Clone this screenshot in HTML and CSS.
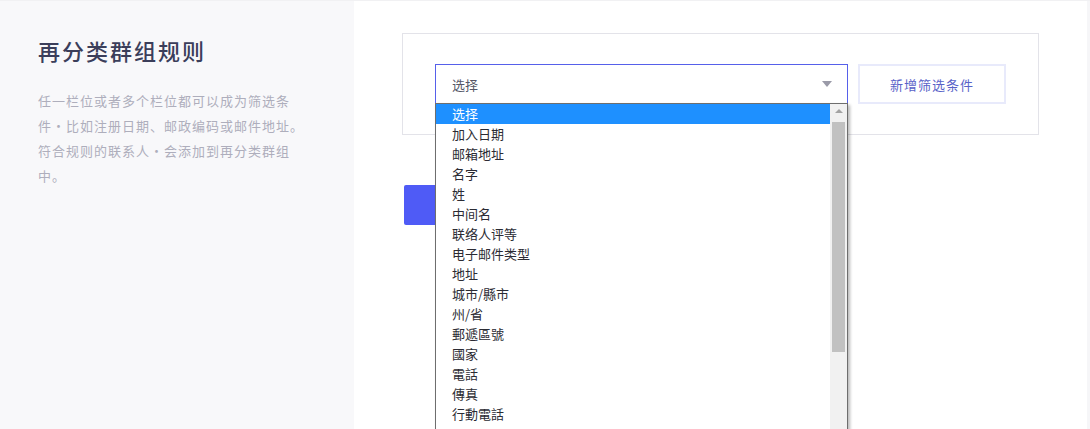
FILE: index.html
```html
<!DOCTYPE html>
<html lang="zh">
<head>
<meta charset="utf-8">
<title>再分类群组规则</title>
<link rel="stylesheet" href="styles.css">
</head>
<body>
<div class="page">
  <aside class="sidebar">
    <h1 class="title">再分类群组规则</h1>
    <p class="desc">任一栏位或者多个栏位都可以成为筛选条件・比如注册日期、邮政编码或邮件地址。符合规则的联系人・会添加到再分类群组中。</p>
  </aside>
  <main class="main">
    <div class="card">
      <div class="select-wrap">
        <div class="select">
          <span class="select-text">选择</span>
          <span class="caret"></span>
        </div>
        <div class="dropdown">
          <ul class="options">
            <li class="option active">选择</li>
            <li class="option">加入日期</li>
            <li class="option">邮箱地址</li>
            <li class="option">名字</li>
            <li class="option">姓</li>
            <li class="option">中间名</li>
            <li class="option">联络人评等</li>
            <li class="option">电子邮件类型</li>
            <li class="option">地址</li>
            <li class="option">城市/縣市</li>
            <li class="option">州/省</li>
            <li class="option">郵遞區號</li>
            <li class="option">國家</li>
            <li class="option">電話</li>
            <li class="option">傳真</li>
            <li class="option">行動電話</li>
          </ul>
          <div class="scrollbar">
            <span class="arrow-up"></span>
            <span class="thumb"></span>
          </div>
        </div>
      </div>
      <button class="btn-add">新增筛选条件</button>
    </div>
    <button class="btn-save" aria-label="保存"></button>
  </main>
</div>
</body>
</html>
```
FILE: styles.css
```css
* { box-sizing: border-box; }
html, body { margin: 0; padding: 0; }
body {
  font-family: "Noto Sans CJK SC", "Noto Sans", "Liberation Sans", sans-serif;
  background: #fff;
  width: 1090px;
  height: 429px;
  overflow: hidden;
}
.page {
  display: flex;
  height: 429px;
  border-top: 1px solid #f1f1f3;
}
.sidebar {
  width: 354px;
  flex: none;
  background: #f8f8fa;
  padding: 33px 38px 0 38px;
}
.title {
  margin: 0;
  font-size: 22px;
  line-height: 32px;
  font-weight: 500;
  letter-spacing: 2px;
  color: #3b3e5a;
}
.desc {
  margin: 22px 0 0;
  width: 266px;
  font-size: 13px;
  line-height: 25px;
  letter-spacing: 1px;
  color: #aeaebc;
}
.main {
  flex: 1;
  padding: 32px 0 0 48px;
  border-right: 3px solid #f6f6f8;
}
.card {
  width: 637px;
  border: 1px solid #e3e3e9;
  padding: 30px 32px 30px 32px;
  display: flex;
  gap: 10px;
}
.select-wrap {
  position: relative;
  width: 413px;
}
.select {
  height: 40px;
  border: 1px solid #5660ea;
  display: flex;
  align-items: center;
  justify-content: space-between;
  padding: 0 15px 0 16px;
}
.select-text {
  font-size: 13px;
  color: #555767;
}
.caret {
  width: 0;
  height: 0;
  border-left: 5px solid transparent;
  border-right: 5px solid transparent;
  border-top: 6px solid #9a9aa8;
}
.btn-add {
  width: 148px;
  height: 40px;
  background: #fff;
  border: 2px solid #e8eafb;
  font-family: inherit;
  font-size: 13px;
  letter-spacing: 1px;
  color: #5862c8;
  padding: 0;
}
.btn-save {
  display: block;
  margin-top: 50px;
  margin-left: 2px;
  width: 120px;
  height: 40px;
  border: none;
  border-radius: 2px;
  background: #4f5bf6;
}
.dropdown {
  position: absolute;
  left: 0;
  top: 39px;
  width: 413px;
  height: 340px;
  background: #fff;
  border: 1px solid #6e6e6e;
  box-shadow: 2px 2px 3px rgba(0, 0, 0, 0.28);
  overflow: hidden;
  z-index: 5;
}
.options {
  list-style: none;
  margin: 0;
  padding: 0;
  width: 394px;
}
.option {
  height: 20px;
  line-height: 20px;
  font-size: 13px;
  padding-left: 16px;
  color: #2b2b33;
}
.option.active {
  background: #1e90ff;
  color: #fff;
}
.scrollbar {
  position: absolute;
  top: 0;
  right: 0;
  bottom: 0;
  width: 17px;
  background: #f1f1f1;
}
.arrow-up {
  position: absolute;
  left: 5px;
  top: 5px;
  width: 0;
  height: 0;
  border-left: 4px solid transparent;
  border-right: 4px solid transparent;
  border-bottom: 4px solid #a3a3a3;
}
.thumb {
  position: absolute;
  left: 2px;
  top: 18px;
  width: 13px;
  height: 230px;
  background: #c1c1c1;
}
```
